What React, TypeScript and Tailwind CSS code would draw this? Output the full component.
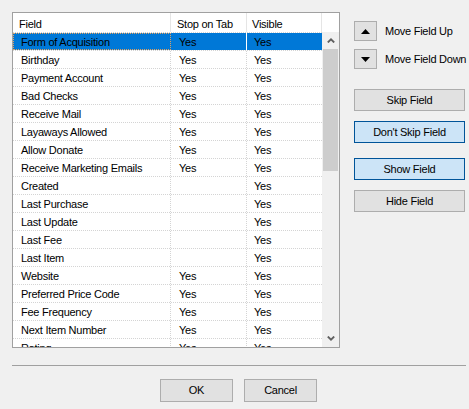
import React from 'react';

type Row = [string, boolean, boolean];

const ROWS: Row[] = [
  ['Form of Acquisition', true, true],
  ['Birthday', true, true],
  ['Payment Account', true, true],
  ['Bad Checks', true, true],
  ['Receive Mail', true, true],
  ['Layaways Allowed', true, true],
  ['Allow Donate', true, true],
  ['Receive Marketing Emails', true, true],
  ['Created', false, true],
  ['Last Purchase', false, true],
  ['Last Update', false, true],
  ['Last Fee', false, true],
  ['Last Item', false, true],
  ['Website', true, true],
  ['Preferred Price Code', true, true],
  ['Fee Frequency', true, true],
  ['Next Item Number', true, true],
  ['Rating', true, true],
];

const Chevron = ({ down }: { down?: boolean }) => (
  <svg width="8" height="5" viewBox="0 0 8 5" className={down ? 'rotate-180' : ''}>
    <polyline points="0.8,4.5 4,1.3 7.2,4.5" fill="none" stroke="#606060" strokeWidth="1.8" />
  </svg>
);

const Triangle = ({ down }: { down?: boolean }) => (
  <svg width="9" height="5" viewBox="0 0 9 5">
    {down ? <polygon points="0,0 9,0 4.5,5" fill="#000" /> : <polygon points="0,5 9,5 4.5,0" fill="#000" />}
  </svg>
);

const FieldList = () => (
  <div className="w-[328px] h-[336px] border border-[#a0a0a0] bg-white flex flex-col overflow-hidden shrink-0">
    {/* header */}
    <div className="flex h-[19px] shrink-0 leading-[13px]">
      <div className="w-[158px] border-r border-[#e5e5e5] pl-[6px] pt-[5px]">Field</div>
      <div className="w-[76px] border-r border-[#e5e5e5] pl-[6px] pt-[5px]">Stop on Tab</div>
      <div className="w-[75px] border-r border-[#e5e5e5] pl-[5px] pt-[5px]">Visible</div>
    </div>

    <div className="flex flex-1 min-h-0">
      <div className="w-[309px] overflow-hidden">
        {ROWS.map(([name, stop, vis], i) => {
          const sel = i === 0;
          return (
            <div key={name} className="flex h-[18px] border-t border-dotted border-[#d4d4d4] leading-[18px] whitespace-nowrap">
              <div
                className={`w-[158px] border-r border-dotted pl-[8px] ${
                  sel ? 'bg-[#0078d7] border-[#e0a060] outline-1 outline-dotted outline-[#e0a060] -outline-offset-1' : 'border-[#d4d4d4]'
                }`}
              >
                {name}
              </div>
              <div className={`w-[76px] border-r pl-[8px] ${sel ? 'bg-[#0078d7] border-white' : 'border-dotted border-[#d4d4d4]'}`}>
                {stop ? 'Yes' : ''}
              </div>
              <div className={`w-[75px] pl-[7px] ${sel ? 'bg-[#0078d7]' : ''}`}>{vis ? 'Yes' : ''}</div>
            </div>
          );
        })}
      </div>

      {/* scrollbar */}
      <div className="w-[17px] bg-[#f0f0f0] flex flex-col">
        <div className="h-[17px] flex items-center justify-center">
          <Chevron />
        </div>
        <div className="h-[122px] w-[15px] ml-[1px] bg-[#cdcdcd]" />
        <div className="flex-1" />
        <div className="h-[17px] flex items-center justify-center">
          <Chevron down />
        </div>
      </div>
    </div>
  </div>
);

const WinButton = ({ label, active, className = '' }: { label: string; active?: boolean; className?: string }) => (
  <button
    className={`w-[111px] h-[22px] border flex items-center justify-center leading-none ${
      active ? 'bg-[#cce4f7] border-[#005499]' : 'bg-[#e1e1e1] border-[#adadad]'
    } ${className}`}
  >
    {label}
  </button>
);

const SidePanel = () => (
  <div className="ml-[14px] pt-[9px] flex flex-col whitespace-nowrap">
    <div className="flex items-center gap-[8px]">
      <button className="w-[23px] h-[20px] bg-[#e1e1e1] border border-[#adadad] flex items-center justify-center">
        <Triangle />
      </button>
      <span>Move Field Up</span>
    </div>
    <div className="flex items-center gap-[8px] mt-[8px]">
      <button className="w-[23px] h-[20px] bg-[#e1e1e1] border border-[#adadad] flex items-center justify-center">
        <Triangle down />
      </button>
      <span>Move Field Down</span>
    </div>
    <WinButton label="Skip Field" className="mt-[20px]" />
    <WinButton label="Don't Skip Field" active className="mt-[10px]" />
    <WinButton label="Show Field" active className="mt-[15px]" />
    <WinButton label="Hide Field" className="mt-[10px]" />
  </div>
);

export default function App() {
  return (
    <div className="w-[469px] h-[409px] bg-[#f0f0f0] text-[11px] tracking-[-0.25px] text-black overflow-hidden font-['Liberation_Sans',Arial,sans-serif]">
      <div className="flex pt-[12px] pl-[12px]">
        <FieldList />
        <SidePanel />
      </div>
      <div className="ml-[12px] mt-[17px] w-[454px] h-px bg-[#a0a0a0]" />
      <div className="flex gap-[11px] mt-[13px] ml-[160px]">
        <button className="w-[73px] h-[23px] bg-[#e1e1e1] border border-[#adadad]">OK</button>
        <button className="w-[73px] h-[23px] bg-[#e1e1e1] border border-[#adadad]">Cancel</button>
      </div>
    </div>
  );
}
